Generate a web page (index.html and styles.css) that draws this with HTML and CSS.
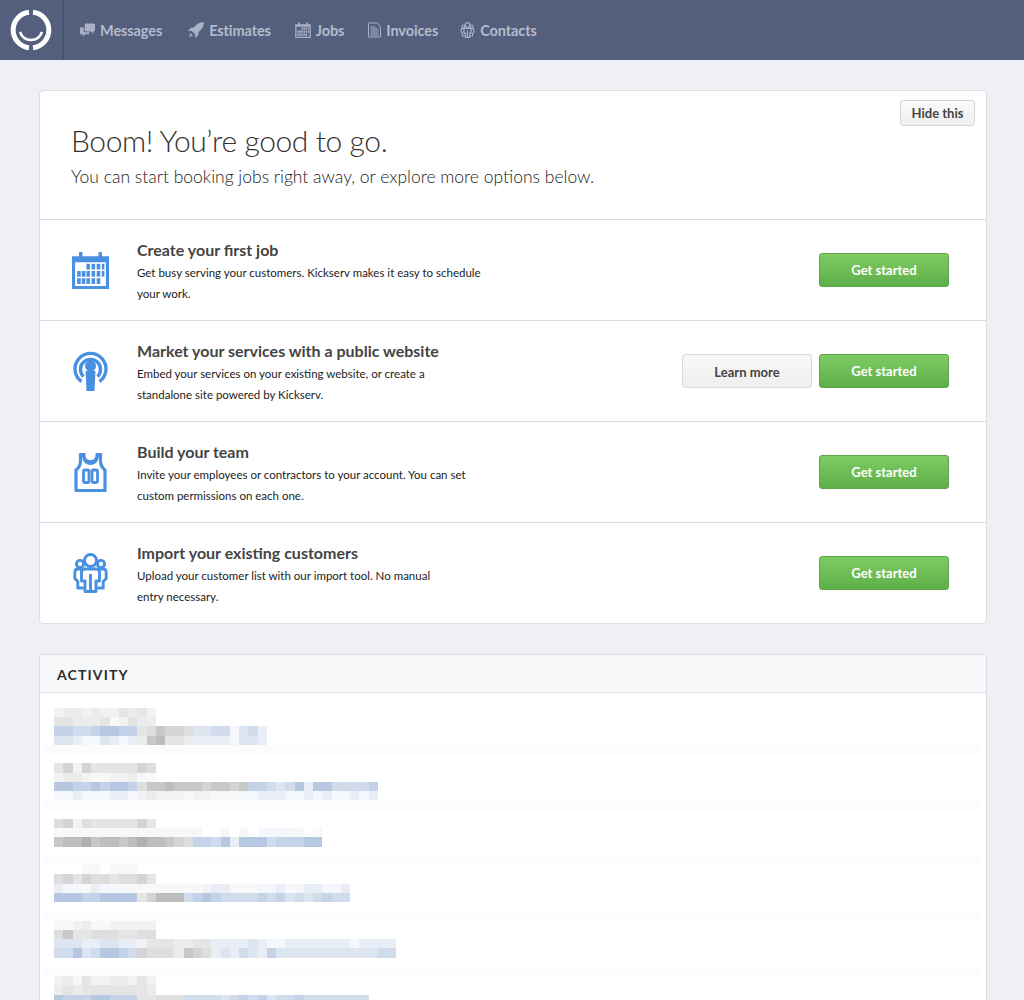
FILE: index.html
```html
<!DOCTYPE html>
<html lang="en">
<head>
<meta charset="utf-8">
<title>Kickserv</title>
<link rel="stylesheet" href="styles.css">
</head>
<body>
<svg class="defs" width="0" height="0" aria-hidden="true">
  <defs>
    <symbol id="i-cal" viewBox="0 0 36 37">
      <path fill="currentColor" fill-rule="evenodd" d="M0 5h7V2.500a1.500 1.500 0 0 1 3 0V5h16V2.500a1.500 1.500 0 0 1 3 0V5h7v32H0zM3 11v23h30V11z"/>
      <path fill="currentColor" d="M7 1h3v8H7zM26 1h3v8h-3z"/>
      <g fill="currentColor">
        <rect x="14" y="12.500" width="3.500" height="5.500"/><rect x="19" y="12.500" width="3.500" height="5.500"/><rect x="24" y="12.500" width="3.500" height="5.500"/><rect x="29" y="12.500" width="2.500" height="5.500"/>
        <rect x="5" y="19.500" width="3.500" height="5.500"/><rect x="9.500" y="19.500" width="3.500" height="5.500"/><rect x="14" y="19.500" width="3.500" height="5.500"/><rect x="19" y="19.500" width="3.500" height="5.500"/><rect x="24" y="19.500" width="3.500" height="5.500"/><rect x="29" y="19.500" width="2.500" height="5.500"/>
        <rect x="5" y="26.500" width="3.500" height="5.500"/><rect x="9.500" y="26.500" width="3.500" height="5.500"/><rect x="14" y="26.500" width="3.500" height="5.500"/><rect x="19" y="26.500" width="3.500" height="5.500"/><rect x="24" y="26.500" width="3.500" height="5.500"/>
      </g>
    </symbol>
    <symbol id="i-pod" viewBox="0 0 36 40">
      <g fill="none" stroke="currentColor" stroke-width="3.400">
        <path d="M9 30.500A15.500 15.500 0 1 1 27 30.500"/>
        <path d="M11 25.500A10 10 0 1 1 25 25.500"/>
      </g>
      <circle cx="18" cy="15" r="5.500" fill="currentColor"/>
      <path fill="currentColor" d="M13 20h10l-1 20h-8z"/>
    </symbol>
    <symbol id="i-jersey" viewBox="0 0 32 40">
      <path fill="none" stroke="currentColor" stroke-width="3.200" stroke-linejoin="round" d="M6 1.500v7c0 4-1 7-4.500 9.500v20.500h29V18C27 15.500 26 12.500 26 8.500v-7"/>
      <path fill="currentColor" d="M5 1h6v2c0 3.500 1.500 5 5 5s5-1.500 5-5V1h6v3h-2.500c-.5 5.500-3.500 9-8.500 9s-8-3.500-8.500-9H5z"/>
      <g fill="none" stroke="currentColor" stroke-width="2.800">
        <rect x="9" y="18" width="5.500" height="12.500" rx="1.500"/>
        <rect x="17.500" y="18" width="5.500" height="12.500" rx="1.500"/>
      </g>
    </symbol>
    <symbol id="i-team" viewBox="0 0 34 40">
      <g fill="none" stroke="currentColor" stroke-width="2.900" stroke-linejoin="round">
        <circle cx="17" cy="7.500" r="6"/>
        <circle cx="6.500" cy="11" r="3.600"/>
        <circle cx="27.500" cy="11" r="3.600"/>
        <path d="M8 16H4.500C2.500 16 1.300 17.500 1.300 19.500v6l3 3v6.500h6"/>
        <path d="M26 16h3.500c2 0 3.200 1.500 3.200 3.500v6l-3 3v6.500h-6"/>
        <path d="M11 16h12c2 0 3 1.200 3 3v9h-3.500v10.500h-11V28H8v-9c0-1.800 1-3 3-3z"/>
        <path d="M17 21v17"/>
      </g>
    </symbol>
    <symbol id="i-msg" viewBox="0 0 16 14">
      <path fill="currentColor" d="M6 0h9a1 1 0 0 1 1 1v6.500a1 1 0 0 1-1 1h-1V11l-2.500-2.500H6a1 1 0 0 1-1-1V1a1 1 0 0 1 1-1z"/>
      <path fill="currentColor" d="M1 4h3v4.500a1 1 0 0 0 1 1h5v1a1 1 0 0 1-1 1H5.500L3 14v-2.500H1a1 1 0 0 1-1-1V5a1 1 0 0 1 1-1z"/>
    </symbol>
    <symbol id="i-rocket" viewBox="0 0 16 16">
      <path fill="currentColor" d="M16 0c-4.500.3-7.500 1.800-10 5.300L2.500 6 0 9l3.500-.2 3.700 3.700L7 16l3-2.500.7-3.500C14.200 7.500 15.700 4.500 16 0z"/>
      <path fill="currentColor" d="M2.500 11l2.500 2.500L1 15z"/>
    </symbol>
    <symbol id="i-doc" viewBox="0 0 13 15">
      <path fill="none" stroke="currentColor" d="M.5.500h8.500l3.500 3.500v10.500H.5z"/>
      <path stroke="currentColor" d="M2.500 4.500h5M2.500 6.500h8M2.500 8.500h8M2.500 10.500h8M2.500 12.500h8"/>
    </symbol>
  </defs>
</svg>

<header class="topbar">
  <a class="logo" href="#" aria-label="Kickserv">
    <svg width="42" height="42" viewBox="0 0 42 42">
      <g fill="none" stroke="#fff">
        <path stroke-width="5" d="M19 3.300A17.810 17.810 0 0 0 19 38.700"/>
        <path stroke-width="5" d="M23 3.300A17.810 17.810 0 0 1 23 38.700"/>
        <path stroke-width="2.500" d="M10 23C12 28.500 16 31 21 31S30 28.500 32 23"/>
      </g>
    </svg>
  </a>
  <nav class="nav">
    <a class="wide" href="#"><svg class="nav-ico w15"><use href="#i-msg"/></svg>Messages</a>
    <a href="#"><svg class="nav-ico w16"><use href="#i-rocket"/></svg>Estimates</a>
    <a href="#"><svg class="nav-ico w16"><use href="#i-cal"/></svg>Jobs</a>
    <a class="tight" href="#"><svg class="nav-ico w13"><use href="#i-doc"/></svg>Invoices</a>
    <a href="#"><svg class="nav-ico w15"><use href="#i-team"/></svg>Contacts</a>
  </nav>
</header>

<main class="page">
  <section class="card">
    <div class="intro">
      <button class="btn-hide" type="button">Hide this</button>
      <h1>Boom! You’re good to go.</h1>
      <p>You can start booking jobs right away, or explore more options below.</p>
    </div>

    <div class="step">
      <svg class="step-ico"><use href="#i-cal"/></svg>
      <div class="step-text">
        <h2>Create your first job</h2>
        <p>Get busy serving your customers. Kickserv makes it easy to schedule<br>your work.</p>
      </div>
      <div class="step-actions"><a class="btn green" href="#">Get started</a></div>
    </div>

    <div class="step">
      <svg class="step-ico"><use href="#i-pod"/></svg>
      <div class="step-text">
        <h2>Market your services with a public website</h2>
        <p>Embed your services on your existing website, or create a<br>standalone site powered by Kickserv.</p>
      </div>
      <div class="step-actions"><a class="btn light" href="#">Learn more</a><a class="btn green" href="#">Get started</a></div>
    </div>

    <div class="step">
      <svg class="step-ico"><use href="#i-jersey"/></svg>
      <div class="step-text">
        <h2>Build your team</h2>
        <p>Invite your employees or contractors to your account. You can set<br>custom permissions on each one.</p>
      </div>
      <div class="step-actions"><a class="btn green" href="#">Get started</a></div>
    </div>

    <div class="step">
      <svg class="step-ico"><use href="#i-team"/></svg>
      <div class="step-text">
        <h2>Import your existing customers</h2>
        <p>Upload your customer list with our import tool. No manual<br>entry necessary.</p>
      </div>
      <div class="step-actions"><a class="btn green" href="#">Get started</a></div>
    </div>
  </section>

  <section class="card activity">
    <h3>ACTIVITY</h3>
    <div class="feed" id="feed"></div>
  </section>
</main>
<script src="feed.js"></script>
</body>
</html>
```

FILE: styles.css
```css
* { box-sizing: border-box; }
html, body { margin: 0; height: 1000px; overflow: hidden; }
body { background: #eef0f5; font-family: Lato, "Liberation Sans", sans-serif; color: #444; }
.defs { position: absolute; }

.topbar { display: flex; height: 60px; background: #535f7d; }
.logo { display: flex; align-items: center; justify-content: center; width: 64px; padding-right: 1px; border-right: 2px solid #485371; }
.nav { display: flex; align-items: center; gap: 24px; padding-left: 16px; }
.nav a { display: flex; align-items: center; gap: 5px; color: #b4bbcd; font-size: 14.5px; font-weight: 700; text-decoration: none; letter-spacing: -0.1px; }
.nav .wide { margin-right: 2px; }
.nav .tight { margin-right: -2px; }
.nav-ico { height: 16px; color: #a9b1c6; }
.w15 { width: 15px; }
.w16 { width: 16px; }
.w13 { width: 13px; }

.page { padding: 30px 37px 0 39px; }
.card { background: #fff; border: 1px solid #dcdee2; border-radius: 4px; }

.intro { position: relative; height: 128px; padding: 29px 31px 0; }
.intro h1 { margin: 0; font-size: 30px; font-weight: 300; line-height: 40px; color: #333; letter-spacing: -0.4px; }
.intro p { margin: 5px 0 0; font-size: 17.5px; font-weight: 300; line-height: 24px; color: #222; }
.btn-hide { position: absolute; top: 9px; right: 11px; width: 75px; height: 26px; padding: 0; border: 1px solid #d5d5d5; border-radius: 3px; background: linear-gradient(#fafafa, #f0f0f0); font: 700 13px Lato, "Liberation Sans", sans-serif; color: #444; }

.step { display: flex; align-items: center; height: 101px; border-top: 1px solid #dcdcdc; padding-left: 32px; }
.step-ico { flex: none; color: #4a90e2; width: 37px; height: 40px; margin-right: 28px; }
.step-text { flex: 1; padding-top: 1px; }
.step-text h2 { margin: 0 0 1px; padding-top: 1px; font-size: 16px; font-weight: 700; line-height: 22px; color: #444; }
.step-text p { margin: 0; font-size: 11.5px; line-height: 21px; color: #222; }
.step-actions { display: flex; gap: 7px; padding-right: 37px; }
.btn { display: flex; align-items: center; justify-content: center; width: 130px; height: 34px; border-radius: 3px; font-size: 13px; font-weight: 700; text-decoration: none; }
.green { color: #fff; background: linear-gradient(#7dcb63, #5faf49); border: 1px solid #5ba648; }
.light { padding-top: 1px; color: #444; background: linear-gradient(#f8f8f8, #efefef); border: 1px solid #dadada; }

.activity { margin-top: 30px; }
.activity h3 { margin: 0; height: 38px; padding-left: 17px; background: #f7f8fa; border-bottom: 1px solid #dcdee2; border-radius: 4px 4px 0 0; font-size: 14px; font-weight: 700; line-height: 39px; letter-spacing: 1.15px; color: #2e2e2e; }
.feed { padding: 5.5px 0 0 14px; }
.line { display: flex; height: 9.25px; }
.line span { width: 9.25px; flex: none; }
.sep { height: 9.25px; margin: 0 7px 0 -9px; background: #fcfcfc; }

.c-_ { background: transparent; }
.c-a { background: #f8f8f8; }
.c-b { background: #f2f2f2; }
.c-c { background: #ececec; }
.c-d { background: #e5e5e5; }
.c-e { background: #dedede; }
.c-f { background: #d4d4d4; }
.c-g { background: #c8c8c8; }
.c-h { background: #bdbdbd; }
.c-i { background: #b0b0b0; }
.c-1 { background: #f4f7fb; }
.c-2 { background: #e8edf6; }
.c-3 { background: #dde5f1; }
.c-4 { background: #d0dcec; }
.c-5 { background: #c4d3e7; }
.c-6 { background: #b6c8e1; }
```

FILE: feed.js
```js
var rows = [
  ["", "bccbcbbdcdb", "ddcccdabdcc", "554456655degffe33441342", "332113212cghddc22221332"],
  ["", "dfbfdddddfe", "bccbaabbcaa", "665565665egghgggfggfg55434626644445", "112111221bcbbbabbaaa112221121211212"],
  ["", "efbedddddfd", "aaaaaaaaaaaaaaaa__a_a_1111a_a", "ghhighhghihhgfe55462666455566", ""],
  ["___aa_aaa__", "efdfeedeefd", "211a211aaaaaaaaab22aaa112a122112", "666556666dfhhh456544445453434544", ""],
  ["aabcaabbbbb", "egddeeeddee", "333223322bdddccdd22223211222222212222", "446346654feeecgfe23243253333333333344", ""],
  ["bcadbbccbdb", "cdcdddddddc", "655566555ddeee44443454534454444444"]
];
var feed = document.getElementById("feed");
rows.forEach(function (row, index) {
  row.forEach(function (text) {
    var line = document.createElement("div");
    line.className = "line";
    text.split("").forEach(function (ch) {
      var cell = document.createElement("span");
      cell.className = "c-" + ch;
      line.appendChild(cell);
    });
    feed.appendChild(line);
  });
  if (index < rows.length - 1) {
    var sep = document.createElement("div");
    sep.className = "sep";
    feed.appendChild(sep);
  }
});
```
